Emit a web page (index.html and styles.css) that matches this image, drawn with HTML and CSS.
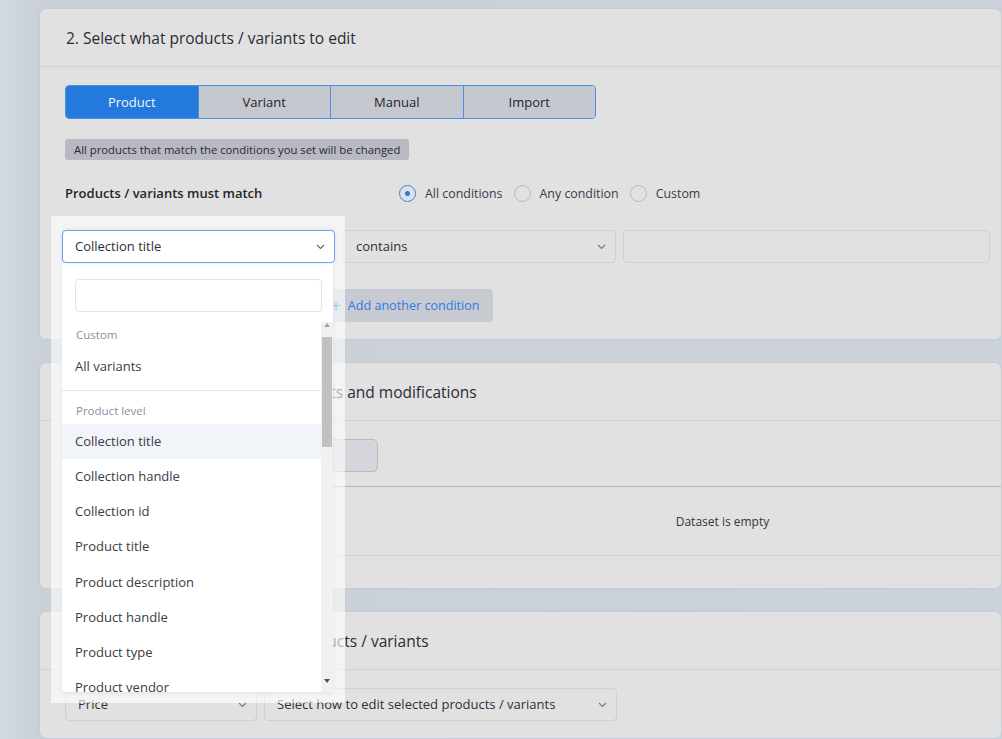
FILE: index.html
```html
<html lang="en">
<head>
    <link rel="stylesheet" href="styles.css">
</head>
<body>
    <div class="page">
        <!-- step 2: pick products -->
        <section class="card">
            <div class="card-head">2. Select what products / variants to edit</div>
            <div class="card-body">
                <div class="tabs">
                    <div class="tab active">Product</div>
                    <div class="tab">Variant</div>
                    <div class="tab">Manual</div>
                    <div class="tab">Import</div>
                </div>
                <div class="hint">All products that match the conditions you set will be changed</div>
                <div class="match-row">
                    <span class="match-label">Products / variants must match</span>
                    <div class="radios">
                        <label class="radio checked"><span class="dot"></span>All conditions</label>
                        <label class="radio"><span class="dot"></span>Any condition</label>
                        <label class="radio"><span class="dot"></span>Custom</label>
                    </div>
                </div>
                <div class="cond-row">
                    <div class="select sel-field">Collection title
                        <svg class="chev" width="9" height="6" viewBox="0 0 9 6"><polyline points="1,1 4.5,4.5 8,1" fill="none" stroke="#777" stroke-width="1.1"/></svg>
                    </div>
                    <div class="select sel-op">contains
                        <svg class="chev" width="9" height="6" viewBox="0 0 9 6"><polyline points="1,1 4.5,4.5 8,1" fill="none" stroke="#777" stroke-width="1.1"/></svg>
                    </div>
                    <div class="text-input"></div>
                </div>
                <div class="add-btn"><span class="plus">+</span>Add another condition</div>
            </div>
        </section>

        <!-- step 3: preview -->
        <section class="card">
            <div class="card-head">3. Preview the list of selected products and modifications</div>
            <div class="card-body">
                <div class="preview-btn">Preview</div>
                <div class="dataset">
                    <div class="empty">Dataset is empty</div>
                </div>
            </div>
        </section>

        <!-- step 4: what to edit -->
        <section class="card">
            <div class="card-head">4. Pick what to edit on selected products / variants</div>
            <div class="card-body">
                <div class="edit-row">
                    <div class="select sel-price">Price
                        <svg class="chev" width="9" height="6" viewBox="0 0 9 6"><polyline points="1,1 4.5,4.5 8,1" fill="none" stroke="#777" stroke-width="1.1"/></svg>
                    </div>
                    <div class="select sel-how">Select how to edit selected products / variants
                        <svg class="chev" width="9" height="6" viewBox="0 0 9 6"><polyline points="1,1 4.5,4.5 8,1" fill="none" stroke="#777" stroke-width="1.1"/></svg>
                    </div>
                </div>
            </div>
        </section>
    </div>

    <!-- tour highlight over the field select -->
    <div class="spotlight">
        <div class="select focused">Collection title
            <svg class="chev" width="9" height="6" viewBox="0 0 9 6"><polyline points="1,1 4.5,4.5 8,1" fill="none" stroke="#666" stroke-width="1.1"/></svg>
        </div>
        <div class="dropdown">
            <div class="search"></div>
            <div class="list-wrap">
                <div class="list">
                    <div class="group">Custom</div>
                    <div class="item first">All variants</div>
                    <div class="sep"></div>
                    <div class="group">Product level</div>
                    <div class="item hover">Collection title</div>
                    <div class="item">Collection handle</div>
                    <div class="item">Collection id</div>
                    <div class="item">Product title</div>
                    <div class="item">Product description</div>
                    <div class="item">Product handle</div>
                    <div class="item">Product type</div>
                    <div class="item">Product vendor</div>
                    <div class="item">Product tag</div>
                </div>
                <div class="scrollbar">
                    <span class="arrow up"></span>
                    <span class="thumb"></span>
                    <span class="arrow down"></span>
                </div>
            </div>
        </div>
    </div>
</body>
</html>
```

FILE: styles.css
```css
html, body {
    height: 739px;
    overflow: hidden;
}
body {
    margin: 0;
    padding: 0;
    font-family: "Open Sans", "Liberation Sans", sans-serif;
    font-size: 13px;
    color: #2c2e3a;
    background: linear-gradient(90deg, #d3d9e0 0px, #c9d0d8 40px, #cbd2da 100%);
    position: relative;
}
.page {
    padding: 9px 0 0 40px;
}
.card {
    width: 961px;
    background-color: #e1e1e1;
    border-radius: 6px;
    box-shadow: 0 0 3px rgba(0, 0, 0, 0.06);
    margin-bottom: 24px;
}
.card-head {
    height: 57px;
    line-height: 58px;
    padding-left: 26px;
    font-size: 15.5px;
    font-weight: 500;
    color: #2a2c38;
    border-bottom: 1px solid #d2d2d4;
}
.card-body {
    padding: 18px 11px 17px 25px;
}

/* tabs */
.tabs {
    display: flex;
    width: 531px;
    height: 34px;
    border: 1px solid #4a8fe2;
    border-radius: 4px;
    overflow: hidden;
    box-sizing: border-box;
}
.tab {
    flex: 1;
    display: flex;
    align-items: center;
    justify-content: center;
    background-color: #c6c8d0;
    color: #23242c;
    border-left: 1px solid #4a8fe2;
}
.tab:first-child {
    border-left: none;
}
.tab.active {
    background-color: #2379dc;
    color: #f2f6fc;
}

.hint {
    display: inline-block;
    margin-top: 20px;
    height: 21px;
    line-height: 21px;
    padding: 0 9px;
    font-size: 11.3px;
    background-color: #b8b9c1;
    border-radius: 3px;
    color: #2a2b36;
}

.match-row {
    display: flex;
    align-items: center;
    height: 22px;
    margin-top: 22px;
}
.match-label {
    width: 334px;
    font-weight: 600;
    color: #24252f;
}
.radios {
    display: flex;
    gap: 11px;
}
.radio {
    display: flex;
    align-items: center;
    font-size: 12.4px;
    color: #3a3b46;
}
.radio .dot {
    width: 15px;
    height: 15px;
    border: 1px solid #b9b9be;
    border-radius: 50%;
    margin-right: 9px;
    display: flex;
    align-items: center;
    justify-content: center;
}
.radio.checked .dot {
    border-color: #3784e0;
}
.radio.checked .dot::after {
    content: "";
    width: 5px;
    height: 5px;
    border-radius: 50%;
    background-color: #2a7be0;
}

/* selects */
.select {
    position: relative;
    box-sizing: border-box;
    height: 33px;
    line-height: 31px;
    padding-left: 12px;
    border: 1px solid #cfd0d5;
    border-radius: 4px;
    background-color: #e1e1e1;
    color: #2e2f3a;
}
.chev {
    position: absolute;
    right: 9px;
    top: 13px;
}
.cond-row {
    display: flex;
    margin-top: 26px;
    margin-left: -3px;
}
.sel-field {
    width: 273px;
}
.sel-op {
    width: 273px;
    margin-left: 8px;
}
.text-input {
    width: 367px;
    height: 33px;
    margin-left: 7px;
    border: 1px solid #cfd0d5;
    border-radius: 4px;
    box-sizing: border-box;
}

.add-btn {
    display: inline-flex;
    align-items: center;
    height: 33px;
    margin: 26px 0 0 257px;
    padding: 0 13px 0 9px;
    background-color: #c8cad2;
    border-radius: 4px;
    color: #2c7be4;
    font-size: 12.6px;
    font-weight: 500;
}
.add-btn .plus {
    font-size: 17px;
    font-weight: 600;
    margin-right: 7px;
}

/* preview card */
.preview-btn {
    width: 313px;
    height: 33px;
    line-height: 33px;
    box-sizing: border-box;
    border: 1px solid #b9babf;
    border-radius: 5px;
    background-color: #d4d6dc;
    text-align: center;
}
.dataset {
    margin: 14px -11px 15px 0;
    border-top: 1px solid #b4b4b6;
    border-bottom: 1px solid #d0d0d3;
    height: 68px;
    display: flex;
    align-items: center;
}
.empty {
    margin-left: 379px;
    width: 558px;
    text-align: center;
    font-size: 12px;
    color: #34353f;
}

.edit-row {
    display: flex;
    gap: 7px;
}
.sel-price {
    width: 192px;
}
.sel-how {
    width: 353px;
}

/* tour spotlight + open dropdown */
.spotlight {
    position: absolute;
    left: 51px;
    top: 216px;
    width: 294px;
    height: 487px;
    background-color: rgba(255, 255, 255, 0.62);
    box-sizing: border-box;
    padding: 14px 0 0 11px;
}
.select.focused {
    width: 273px;
    background-color: #fff;
    border-color: #6aa4ea;
    box-shadow: 0 0 3px rgba(74, 143, 226, 0.25);
}
.dropdown {
    width: 271px;
    height: 429px;
    background-color: #fff;
    border-radius: 0 0 4px 4px;
    box-shadow: 0 2px 4px rgba(0, 0, 0, 0.06);
    padding-top: 16px;
    box-sizing: border-box;
}
.search {
    width: 247px;
    height: 33px;
    margin-left: 13px;
    border: 1px solid #e2e3ea;
    border-radius: 4px;
    box-sizing: border-box;
}
.list-wrap {
    position: relative;
    display: flex;
    height: 370px;
    margin-top: 10px;
    overflow: hidden;
    border-radius: 0 0 4px 4px;
}
.list {
    width: 259px;
}
.group {
    height: 26px;
    line-height: 26px;
    padding-left: 14px;
    font-size: 11.5px;
    color: #8d8ea2;
}
.item {
    height: 35.15px;
    line-height: 35px;
    padding-left: 13px;
    color: #3a3b47;
}
.item.first {
    height: 36px;
    line-height: 36px;
}
.sep {
    border-top: 1px solid #e6e7ee;
    margin: 6px 0 7px;
}
.item.hover {
    background-color: #f1f4f8;
}
.scrollbar {
    position: relative;
    width: 12px;
    background-color: #f1f1f1;
}
.thumb {
    position: absolute;
    left: 1px;
    top: 15px;
    width: 10px;
    height: 110px;
    background-color: #c1c1c1;
}
.arrow {
    position: absolute;
    left: 3px;
    width: 0;
    height: 0;
    border-left: 3px solid transparent;
    border-right: 3px solid transparent;
}
.arrow.up {
    top: 1px;
    border-bottom: 4px solid #a3a3a3;
}
.arrow.down {
    bottom: 9px;
    border-top: 4px solid #505050;
}
```
